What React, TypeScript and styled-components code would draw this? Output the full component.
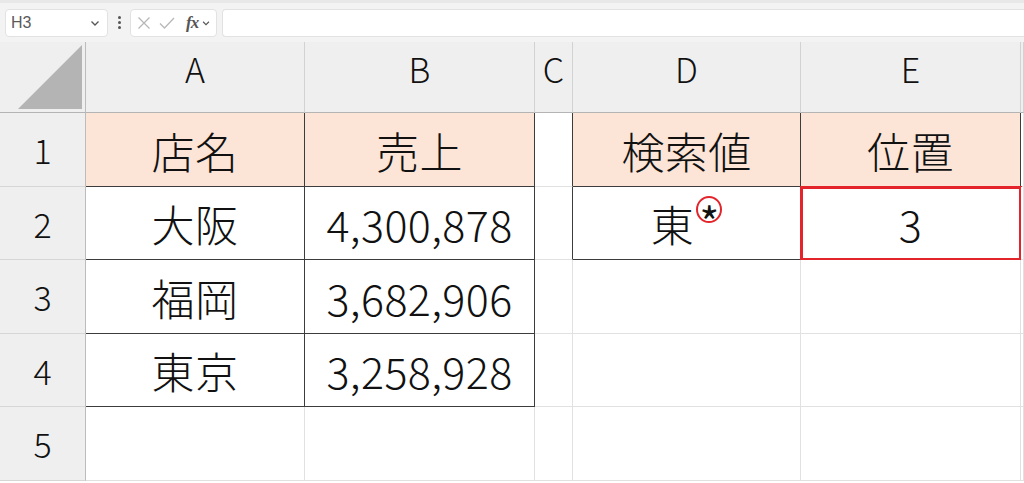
import React from 'react';
import styled, {createGlobalStyle} from 'styled-components';

const GlobalStyle = createGlobalStyle`
    html, body {
        margin: 0;
        padding: 0;
        background: #ffffff;
        overflow: hidden;
    }
    body {
        font-family: "Noto Sans CJK JP", "Noto Sans", sans-serif;
    }
`;

const COLS = [86, 219, 230, 38, 228, 220];
const DARK = '#3c3c3c';
const GRID = '#e1e1e1';

const Page = styled.div`
    width: 1024px;
    height: 483px;
    display: flex;
    flex-direction: column;
`;

const Toolbar = styled.div`
    height: 42px;
    box-sizing: border-box;
    background: #f3f3f3;
    border-top: 3px solid #e8e8e8;
    display: flex;
    align-items: center;
    padding: 0 0 0 5px;
    gap: 5px;
`;

const Box = styled.div<{$w?: number; $grow?: boolean}>`
    height: 28px;
    box-sizing: border-box;
    background: #ffffff;
    border: 1px solid #e2e2e2;
    border-radius: 4px;
    display: flex;
    align-items: center;
    ${({$w}) => ($w ? `width: ${$w}px;` : '')}
    ${({$grow}) => ($grow ? 'flex: 1; border-right: none; border-radius: 4px 0 0 4px;' : '')}
`;

const NameText = styled.span`
    flex: 1;
    padding-left: 5px;
    font-family: "Liberation Sans", Arial, sans-serif;
    font-size: 16px;
    color: #5a5a5a;
`;

const Dots = styled.div`
    width: 12px;
    display: flex;
    flex-direction: column;
    align-items: center;
    gap: 2px;

    span {
        width: 3px;
        height: 3px;
        border-radius: 50%;
        background: #555555;
    }
`;

const Fx = styled.span`
    font-family: "Liberation Serif", "Times New Roman", serif;
    font-style: italic;
    font-weight: bold;
    font-size: 17px;
    color: #555555;
    margin-left: 11px;
    letter-spacing: -1px;
`;

const Sheet = styled.div`
    flex: 1;
    display: grid;
    grid-template-columns: ${COLS.map((c) => `${c}px`).join(' ')} 1fr;
    grid-template-rows: 71px 74px 73px 74px 73px 74px;
    font-weight: 300;
`;

const Corner = styled.div`
    background: #efefef;
    border-right: 1px solid #bcbcbc;
    border-bottom: 1px solid #b4b4b4;
    display: flex;
    align-items: flex-end;
    justify-content: flex-end;
    padding: 0 3px 3px 0;
`;

const ColHead = styled.div`
    background: #efefef;
    border-right: 1px solid #d2d2d2;
    border-bottom: 1px solid #b4b4b4;
    display: flex;
    align-items: center;
    justify-content: center;
    padding-bottom: 18px;
    font-size: 34px;
    color: #111111;
    overflow: hidden;
`;

const RowHead = styled.div`
    background: #efefef;
    border-right: 1px solid #bcbcbc;
    border-bottom: 1px solid #d6d6d6;
    display: flex;
    align-items: center;
    justify-content: center;
    font-size: 34px;
    color: #111111;
`;

const Cell = styled.div<{$fill?: boolean; $right?: boolean; $bottom?: boolean; $selected?: boolean}>`
    background: ${({$fill}) => ($fill ? '#fce4d6' : '#ffffff')};
    border-right: 1px solid ${({$right}) => ($right ? DARK : GRID)};
    border-bottom: 1px solid ${({$bottom}) => ($bottom ? DARK : GRID)};
    display: flex;
    align-items: center;
    justify-content: center;
    font-size: 43px;
    letter-spacing: 0.4px;
    color: #111111;
    white-space: nowrap;
    ${({$selected}) => ($selected ? 'outline: 3px solid #e3242b; outline-offset: -2px;' : '')}
`;

const Mark = styled.span`
    align-self: flex-start;
    margin: 9px 0 0 2px;
    width: 22px;
    height: 23px;
    border: 2px solid #e3242b;
    border-radius: 50%;
    display: flex;
    justify-content: center;
    font-size: 42px;
    font-weight: 400;
    line-height: 27px;
    letter-spacing: 0;

    span {
        display: block;
        transform: translateY(9px);
    }
`;

type CellDef = {text?: React.ReactNode; fill?: boolean; right?: boolean; bottom?: boolean; selected?: boolean};

const rows: CellDef[][] = [
    [
        {text: '店名', fill: true, right: true, bottom: true},
        {text: '売上', fill: true, right: true, bottom: true},
        {right: true},
        {text: '検索値', fill: true, right: true, bottom: true},
        {text: '位置', fill: true, right: true, bottom: true},
        {},
    ],
    [
        {text: '大阪', right: true, bottom: true},
        {text: '4,300,878', right: true, bottom: true},
        {right: true},
        {text: <>東<Mark><span>*</span></Mark></>, right: true, bottom: true},
        {text: '3', right: true, bottom: true, selected: true},
        {},
    ],
    [
        {text: '福岡', right: true, bottom: true},
        {text: '3,682,906', right: true, bottom: true},
        {}, {}, {}, {},
    ],
    [
        {text: '東京', right: true, bottom: true},
        {text: '3,258,928', right: true, bottom: true},
        {}, {}, {}, {},
    ],
    [{}, {}, {}, {}, {}, {}],
];

const Chevron: React.FC<{size: number}> = ({size}) => (
    <svg width={size} height={size} viewBox="0 0 12 12" fill="none" stroke="#555" strokeWidth="1.3">
        <path d="M2.5 4.5 L6 8 L9.5 4.5" />
    </svg>
);

const App: React.FC = () => {
    return (
        <Page>
            <GlobalStyle />
            <Toolbar>
                <Box $w={103}>
                    <NameText>H3</NameText>
                    <span style={{marginRight: 6, display: 'flex'}}><Chevron size={12} /></span>
                </Box>
                <Dots><span /><span /><span /></Dots>
                <Box $w={87}>
                    <svg width="14" height="14" viewBox="0 0 14 14" style={{marginLeft: 6}} stroke="#b8b8b8" strokeWidth="1.3">
                        <path d="M1.5 1.5 L12.5 12.5 M12.5 1.5 L1.5 12.5" />
                    </svg>
                    <svg width="16" height="14" viewBox="0 0 16 14" style={{marginLeft: 8}} fill="none" stroke="#b8b8b8" strokeWidth="1.3">
                        <path d="M1 7.5 L5.5 12 L15 2" />
                    </svg>
                    <Fx>fx</Fx>
                    <span style={{display: 'flex', marginLeft: 3}}><Chevron size={10} /></span>
                </Box>
                <Box $grow />
            </Toolbar>
            <Sheet>
                <Corner>
                    <svg width="64" height="64" viewBox="0 0 64 64">
                        <polygon points="0,64 64,0 64,64" fill="#b4b4b4" />
                    </svg>
                </Corner>
                {['A', 'B', 'C', 'D', 'E', ''].map((c, i) => (
                    <ColHead key={`h${i}`}>{c}</ColHead>
                ))}
                {rows.map((row, r) => (
                    <React.Fragment key={r}>
                        <RowHead>{r + 1}</RowHead>
                        {row.map((cell, c) => (
                            <Cell
                                key={c}
                                $fill={cell.fill}
                                $right={cell.right}
                                $bottom={cell.bottom}
                                $selected={cell.selected}
                            >
                                {cell.text}
                            </Cell>
                        ))}
                    </React.Fragment>
                ))}
            </Sheet>
        </Page>
    );
};

export default App;
